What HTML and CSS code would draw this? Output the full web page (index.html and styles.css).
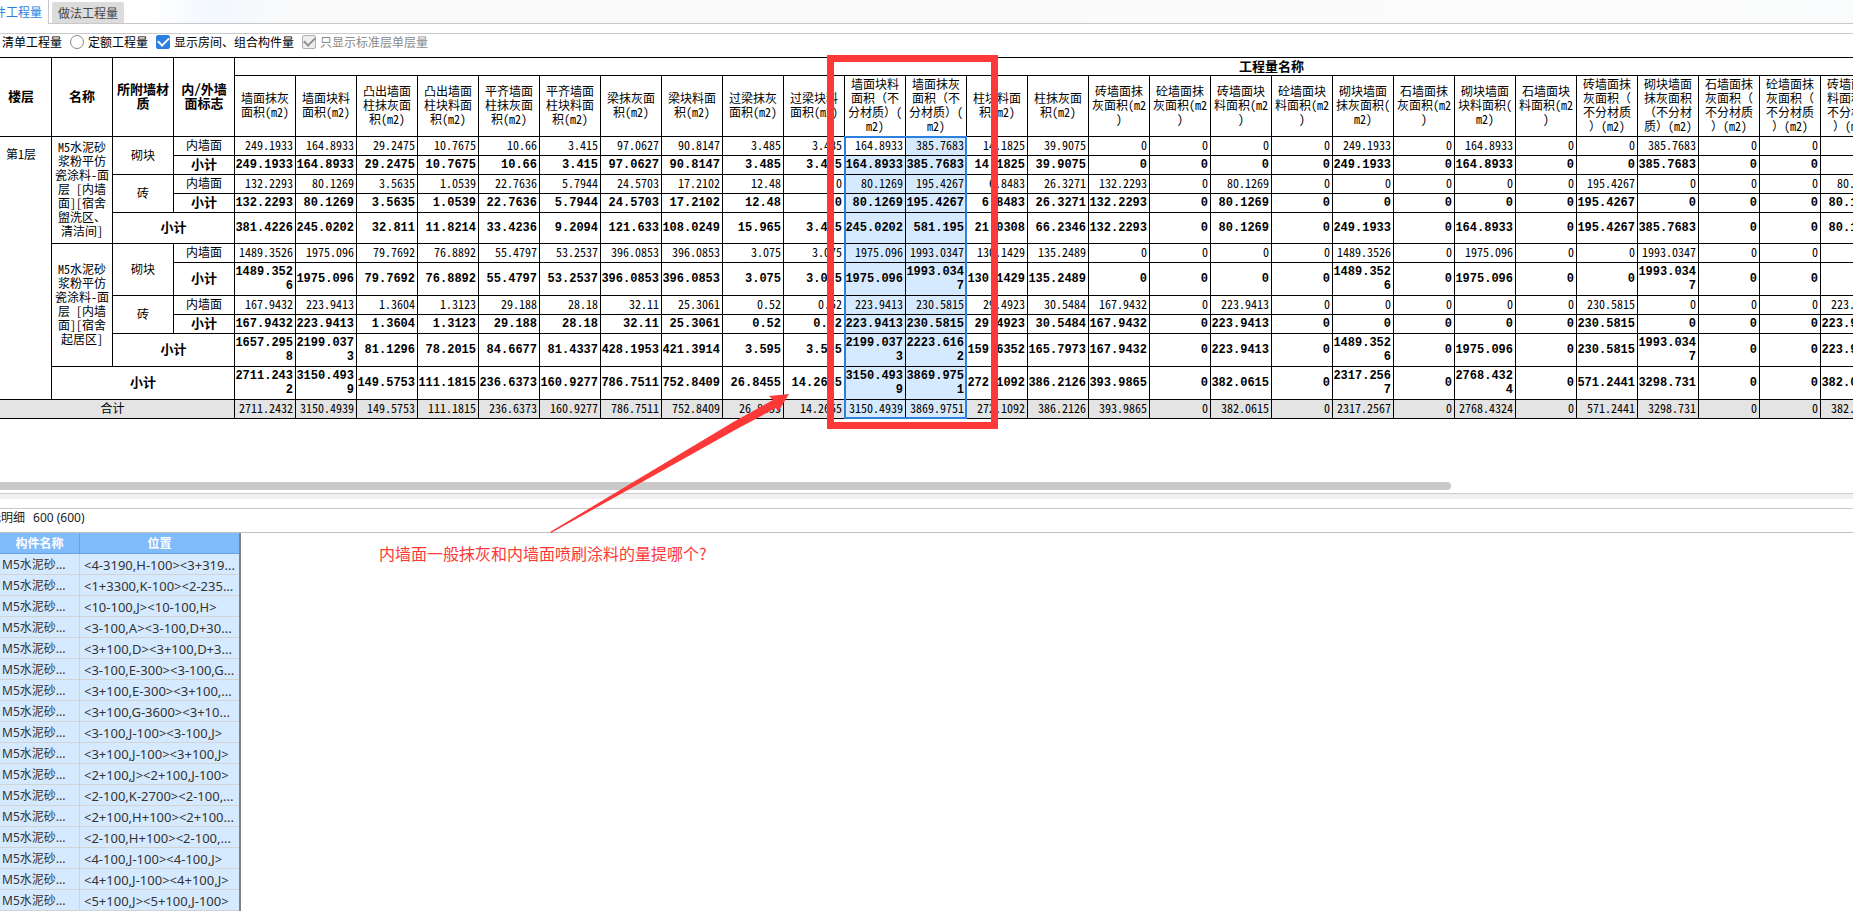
FILE: index.html
```html
<!DOCTYPE html>
<html lang="zh-CN">
<head>
<meta charset="utf-8">
<title>构件工程量</title>
<link rel="stylesheet" href="styles.css">
</head>
<body>
<nav class="tabs">
  <button class="tab tab-active" type="button">构件工程量</button>
  <button class="tab" type="button">做法工程量</button>
</nav>
<form class="options">
  <label class="option"><input type="radio" name="kind" checked>清单工程量</label>
  <label class="option"><input type="radio" name="kind">定额工程量</label>
  <label class="option"><input type="checkbox" checked>显示房间、组合构件量</label>
  <label class="option option-off"><input type="checkbox" checked disabled>只显示标准层单层量</label>
</form>
<main class="report">
<div class="sheet">
<table class="quantities">
<thead>
<tr class="head-top"><th rowspan="2">楼层</th><th rowspan="2">名称</th><th rowspan="2">所附墙材<br>质</th><th rowspan="2">内/外墙<br>面标志</th><th colspan="34">工程量名称</th></tr>
<tr class="head-names">
<th>墙面抹灰<br>面积(m2)<th>墙面块料<br>面积(m2)<th>凸出墙面<br>柱抹灰面<br>积(m2)<th>凸出墙面<br>柱块料面<br>积(m2)<th>平齐墙面<br>柱抹灰面<br>积(m2)<th>平齐墙面<br>柱块料面<br>积(m2)<th>梁抹灰面<br>积(m2)<th>梁块料面<br>积(m2)<th>过梁抹灰<br>面积(m2)<th>过梁块料<br>面积(m2)<th>墙面块料<br>面积<span class="full">（</span>不<br>分材质<span class="full">）</span>(<br>m2)<th>墙面抹灰<br>面积<span class="full">（</span>不<br>分材质<span class="full">）</span>(<br>m2)<th>柱块料面<br>积(m2)<th>柱抹灰面<br>积(m2)<th>砖墙面抹<br>灰面积(m2<br>)<th>砼墙面抹<br>灰面积(m2<br>)<th>砖墙面块<br>料面积(m2<br>)<th>砼墙面块<br>料面积(m2<br>)<th>砌块墙面<br>抹灰面积(<br>m2)<th>石墙面抹<br>灰面积(m2<br>)<th>砌块墙面<br>块料面积(<br>m2)<th>石墙面块<br>料面积(m2<br>)<th>砖墙面抹<br>灰面积<span class="full">（</span><br>不分材质<br><span class="full">）</span>(m2)<th>砌块墙面<br>抹灰面积<br><span class="full">（</span>不分材<br>质<span class="full">）</span>(m2)<th>石墙面抹<br>灰面积<span class="full">（</span><br>不分材质<br><span class="full">）</span>(m2)<th>砼墙面抹<br>灰面积<span class="full">（</span><br>不分材质<br><span class="full">）</span>(m2)<th>砖墙面块<br>料面积<span class="full">（</span><br>不分材质<br><span class="full">）</span>(m2)
</tr>
</thead>
<tbody>
<tr><th class="floor" rowspan="11">第1层</th><th class="name" rowspan="5">M5水泥砂<br>浆粉平仿<br>瓷涂料-面<br>层 [内墙<br>面][宿舍<br>盥洗区、<br>清洁间]</th><th rowspan="2">砌块</th><th>内墙面</th>
<td>249.1933<td>164.8933<td>29.2475<td>10.7675<td>10.66<td>3.415<td>97.0627<td>90.8147<td>3.485<td>3.485<td>164.8933<td>385.7683<td>14.1825<td>39.9075<td>0<td>0<td>0<td>0<td>249.1933<td>0<td>164.8933<td>0<td>0<td>385.7683<td>0<td>0<td>0</tr>
<tr class="sum"><th>小计</th>
<td>249.1933<td>164.8933<td>29.2475<td>10.7675<td>10.66<td>3.415<td>97.0627<td>90.8147<td>3.485<td>3.485<td>164.8933<td>385.7683<td>14.1825<td>39.9075<td>0<td>0<td>0<td>0<td>249.1933<td>0<td>164.8933<td>0<td>0<td>385.7683<td>0<td>0<td>0</tr>
<tr><th rowspan="2">砖</th><th>内墙面</th>
<td>132.2293<td>80.1269<td>3.5635<td>1.0539<td>22.7636<td>5.7944<td>24.5703<td>17.2102<td>12.48<td>0<td>80.1269<td>195.4267<td>6.8483<td>26.3271<td>132.2293<td>0<td>80.1269<td>0<td>0<td>0<td>0<td>0<td>195.4267<td>0<td>0<td>0<td>80.1269</tr>
<tr class="sum"><th>小计</th>
<td>132.2293<td>80.1269<td>3.5635<td>1.0539<td>22.7636<td>5.7944<td>24.5703<td>17.2102<td>12.48<td>0<td>80.1269<td>195.4267<td>6.8483<td>26.3271<td>132.2293<td>0<td>80.1269<td>0<td>0<td>0<td>0<td>0<td>195.4267<td>0<td>0<td>0<td>80.1269</tr>
<tr class="sum medium"><th colspan="2">小计</th>
<td>381.4226<td>245.0202<td>32.811<td>11.8214<td>33.4236<td>9.2094<td>121.633<td>108.0249<td>15.965<td>3.485<td>245.0202<td>581.195<td>21.0308<td>66.2346<td>132.2293<td>0<td>80.1269<td>0<td>249.1933<td>0<td>164.8933<td>0<td>195.4267<td>385.7683<td>0<td>0<td>80.1269</tr>
<tr><th class="name" rowspan="5">M5水泥砂<br>浆粉平仿<br>瓷涂料-面<br>层 [内墙<br>面][宿舍<br>起居区]</th><th rowspan="2">砌块</th><th>内墙面</th>
<td>1489.3526<td>1975.096<td>79.7692<td>76.8892<td>55.4797<td>53.2537<td>396.0853<td>396.0853<td>3.075<td>3.075<td>1975.096<td>1993.0347<td>130.1429<td>135.2489<td>0<td>0<td>0<td>0<td>1489.3526<td>0<td>1975.096<td>0<td>0<td>1993.0347<td>0<td>0<td>0</tr>
<tr class="sum tall"><th>小计</th>
<td>1489.352<br>6<td>1975.096<td>79.7692<td>76.8892<td>55.4797<td>53.2537<td>396.0853<td>396.0853<td>3.075<td>3.075<td>1975.096<td>1993.034<br>7<td>130.1429<td>135.2489<td>0<td>0<td>0<td>0<td>1489.352<br>6<td>0<td>1975.096<td>0<td>0<td>1993.034<br>7<td>0<td>0<td>0</tr>
<tr><th rowspan="2">砖</th><th>内墙面</th>
<td>167.9432<td>223.9413<td>1.3604<td>1.3123<td>29.188<td>28.18<td>32.11<td>25.3061<td>0.52<td>0.52<td>223.9413<td>230.5815<td>29.4923<td>30.5484<td>167.9432<td>0<td>223.9413<td>0<td>0<td>0<td>0<td>0<td>230.5815<td>0<td>0<td>0<td>223.9413</tr>
<tr class="sum"><th>小计</th>
<td>167.9432<td>223.9413<td>1.3604<td>1.3123<td>29.188<td>28.18<td>32.11<td>25.3061<td>0.52<td>0.52<td>223.9413<td>230.5815<td>29.4923<td>30.5484<td>167.9432<td>0<td>223.9413<td>0<td>0<td>0<td>0<td>0<td>230.5815<td>0<td>0<td>0<td>223.9413</tr>
<tr class="sum tall"><th colspan="2">小计</th>
<td>1657.295<br>8<td>2199.037<br>3<td>81.1296<td>78.2015<td>84.6677<td>81.4337<td>428.1953<td>421.3914<td>3.595<td>3.595<td>2199.037<br>3<td>2223.616<br>2<td>159.6352<td>165.7973<td>167.9432<td>0<td>223.9413<td>0<td>1489.352<br>6<td>0<td>1975.096<td>0<td>230.5815<td>1993.034<br>7<td>0<td>0<td>223.9413</tr>
<tr class="sum tall"><th colspan="3">小计</th>
<td>2711.243<br>2<td>3150.493<br>9<td>149.5753<td>111.1815<td>236.6373<td>160.9277<td>786.7511<td>752.8409<td>26.8455<td>14.2655<td>3150.493<br>9<td>3869.975<br>1<td>272.1092<td>386.2126<td>393.9865<td>0<td>382.0615<td>0<td>2317.256<br>7<td>0<td>2768.432<br>4<td>0<td>571.2441<td>3298.731<td>0<td>0<td>382.0615</tr>
<tr class="total"><th colspan="4">合计</th>
<td>2711.2432<td>3150.4939<td>149.5753<td>111.1815<td>236.6373<td>160.9277<td>786.7511<td>752.8409<td>26.8455<td>14.2655<td>3150.4939<td>3869.9751<td>272.1092<td>386.2126<td>393.9865<td>0<td>382.0615<td>0<td>2317.2567<td>0<td>2768.4324<td>0<td>571.2441<td>3298.731<td>0<td>0<td>382.0615</tr>
</tbody>
</table>
<div class="selection"></div>
</div>
<div class="scroll-thumb"></div>
</main>
<div class="splitter"></div>
<section class="detail">
<h2 class="detail-title"><span>图元明细</span><span>600 (600)</span></h2>
<table class="elements">
<thead><tr><th>构件名称</th><th>位置</th></tr></thead>
<tbody>
<tr><td>M5水泥砂...</td><td>&lt;4-3190,H-100&gt;&lt;3+319...</td></tr>
<tr><td>M5水泥砂...</td><td>&lt;1+3300,K-100&gt;&lt;2-235...</td></tr>
<tr><td>M5水泥砂...</td><td>&lt;10-100,J&gt;&lt;10-100,H&gt;</td></tr>
<tr><td>M5水泥砂...</td><td>&lt;3-100,A&gt;&lt;3-100,D+30...</td></tr>
<tr><td>M5水泥砂...</td><td>&lt;3+100,D&gt;&lt;3+100,D+3...</td></tr>
<tr><td>M5水泥砂...</td><td>&lt;3-100,E-300&gt;&lt;3-100,G...</td></tr>
<tr><td>M5水泥砂...</td><td>&lt;3+100,E-300&gt;&lt;3+100,...</td></tr>
<tr><td>M5水泥砂...</td><td>&lt;3+100,G-3600&gt;&lt;3+10...</td></tr>
<tr><td>M5水泥砂...</td><td>&lt;3-100,J-100&gt;&lt;3-100,J&gt;</td></tr>
<tr><td>M5水泥砂...</td><td>&lt;3+100,J-100&gt;&lt;3+100,J&gt;</td></tr>
<tr><td>M5水泥砂...</td><td>&lt;2+100,J&gt;&lt;2+100,J-100&gt;</td></tr>
<tr><td>M5水泥砂...</td><td>&lt;2-100,K-2700&gt;&lt;2-100,...</td></tr>
<tr><td>M5水泥砂...</td><td>&lt;2+100,H+100&gt;&lt;2+100...</td></tr>
<tr><td>M5水泥砂...</td><td>&lt;2-100,H+100&gt;&lt;2-100,...</td></tr>
<tr><td>M5水泥砂...</td><td>&lt;4-100,J-100&gt;&lt;4-100,J&gt;</td></tr>
<tr><td>M5水泥砂...</td><td>&lt;4+100,J-100&gt;&lt;4+100,J&gt;</td></tr>
<tr><td>M5水泥砂...</td><td>&lt;5+100,J&gt;&lt;5+100,J-100&gt;</td></tr>
</tbody>
</table>
</section>
<div class="mark-box"></div>
<svg class="mark-arrow" width="240" height="140" viewBox="0 0 240 140"><path d="M0 138 L185 27 L223 6 L219 2 L239 0 L228 18 L226 14 L185 36 L1 139 Z"/></svg>
<p class="mark-text">内墙面一般抹灰和内墙面喷刷涂料的量提哪个?</p>
</body>
</html>
```
FILE: styles.css
```css
* { box-sizing: border-box; }
body {
  margin: 0;
  position: relative;
  min-height: 100vh;
  overflow: hidden;
  background: #fff;
  color: #000;
  font: 12px/16px "Noto Sans CJK SC", sans-serif;
}
.tabs {
  display: flex;
  align-items: flex-end;
  gap: 3px;
  height: 24px;
  background: linear-gradient(90deg, #fff 0, #fff 150px, #f3f8fe 210px, #fafafa 300px, #fafbfc 100%);
  border-bottom: 1px solid #c8c8c8;
}
.tab {
  flex: none;
  height: 21px;
  padding: 0 6px;
  border: 0;
  border-radius: 2px 2px 0 0;
  background: #dcdcdc;
  color: #444;
  font: inherit;
}
.tab-active {
  height: 24px;
  margin: 0 0 -1px -24px;
  border-right: 1px solid #c8c8c8;
  border-radius: 0;
  background: #fff;
  color: #2b7fe0;
}
.options {
  display: flex;
  gap: 8px;
  height: 24px;
  margin-top: 9px;
  margin-left: -16px;
  border-top: 1px solid #ccc;
}
.option { display: flex; align-items: center; gap: 4px; padding-bottom: 7px; }
.option-off { color: #8a8a8a; }
.option input {
  appearance: none;
  width: 14px;
  height: 14px;
  margin: 0;
  border: 1px solid #888;
  background: #fff;
}
.option input[type="radio"] { border-radius: 50%; }
.option input[type="checkbox"] {
  display: grid;
  place-items: center;
  border-color: #2b7fe0;
  border-radius: 2px;
  background: #2b7fe0;
}
.option input[type="checkbox"]::after {
  content: "";
  width: 9px;
  height: 5px;
  margin-bottom: 3px;
  border: solid #fff;
  border-width: 0 0 2px 2px;
  rotate: -45deg;
}
.option input[type="checkbox"]:disabled { border-color: #b0b0b0; background: #eee; }
.option input[type="checkbox"]:disabled::after { border-color: #909090; }

.report { height: 436px; overflow: hidden; }
.sheet { position: relative; height: 425px; margin-left: -9px; }
.quantities {
  width: 2318px;
  table-layout: fixed;
  border-spacing: 0;
  border-top: 1px solid #000;
  line-height: 14px;
  white-space: nowrap;
  font-feature-settings: "hwid";
}
.quantities .full { font-feature-settings: normal; }
.quantities tr { height: 19px; }
.quantities .head-top { height: 18px; }
.quantities .head-names { height: 61px; }
.quantities .medium { height: 31px; }
.quantities .tall { height: 33px; }
.quantities th, .quantities td {
  padding: 0 0 2px;
  border: solid #000;
  border-width: 0 1px 1px 0;
  font-weight: 400;
  text-align: center;
}
.quantities td { padding-right: 2px; text-align: right; }
.quantities .head-top th, .quantities .sum th { font-size: 13px; font-weight: 700; }
.quantities .sum td { padding-bottom: 0; font: 700 12px/14px "Liberation Mono", monospace; }
.quantities .floor { padding-top: 10px; vertical-align: top; }
.quantities tbody td:nth-last-child(16), .quantities tbody td:nth-last-child(17) { background: #d6eaff; }
.quantities tbody tr:first-child td:nth-last-child(17) { background: #fff; }
.quantities .total { background: #e4e4e4; }
.selection {
  position: absolute;
  left: 853px;
  top: 79px;
  width: 123px;
  height: 283px;
  border: 2px solid #2b80e0;
}
.scroll-thumb { width: 1451px; height: 8px; background: #c9c9c9; border-radius: 0 4px 4px 0; }
.splitter { height: 6px; border-top: 1px solid #ccc; background: #f0f0f0; }

.detail { margin-top: 9px; border-top: 1px solid #c8c8c8; }
.detail-title {
  display: flex;
  gap: 8px;
  height: 24px;
  margin: 0;
  margin-left: -23px;
  border-bottom: 1px solid #c0c0c0;
  font: 12px/18px "Noto Sans", "Noto Sans CJK SC", sans-serif;
  color: #222;
}
.elements {
  width: 241px;
  table-layout: fixed;
  border-spacing: 0;
  border-right: 2px solid #808080;
  color: #333;
  font: 12px/18px "Noto Sans", "Noto Sans CJK SC", sans-serif;
  white-space: nowrap;
}
.elements tr { height: 21px; }
.elements th, .elements td {
  padding: 2px 0 0 4px;
  border: solid #d3d3d3;
  border-width: 0 0 1px;
  background: #d6eaff;
  overflow: hidden;
}
.elements th { padding: 2px 0 0; border-color: #62a3ea; background: #80bbfb; color: #fff; }
.elements th:first-child { width: 80px; border-right-width: 1px; }
.elements td:first-child { padding-left: 2px; border-right-width: 1px; }
.elements td:last-child { font-size: 13px; }

.mark-box {
  position: absolute;
  left: 827px;
  top: 55px;
  width: 171px;
  height: 374px;
  border: 7px solid #fc3838;
}
.mark-arrow { position: absolute; left: 550px; top: 394px; fill: #fc3838; }
.mark-text {
  position: absolute;
  left: 379px;
  top: 542px;
  margin: 0;
  color: #fc3838;
  font-size: 16px;
  line-height: 22px;
}
```
